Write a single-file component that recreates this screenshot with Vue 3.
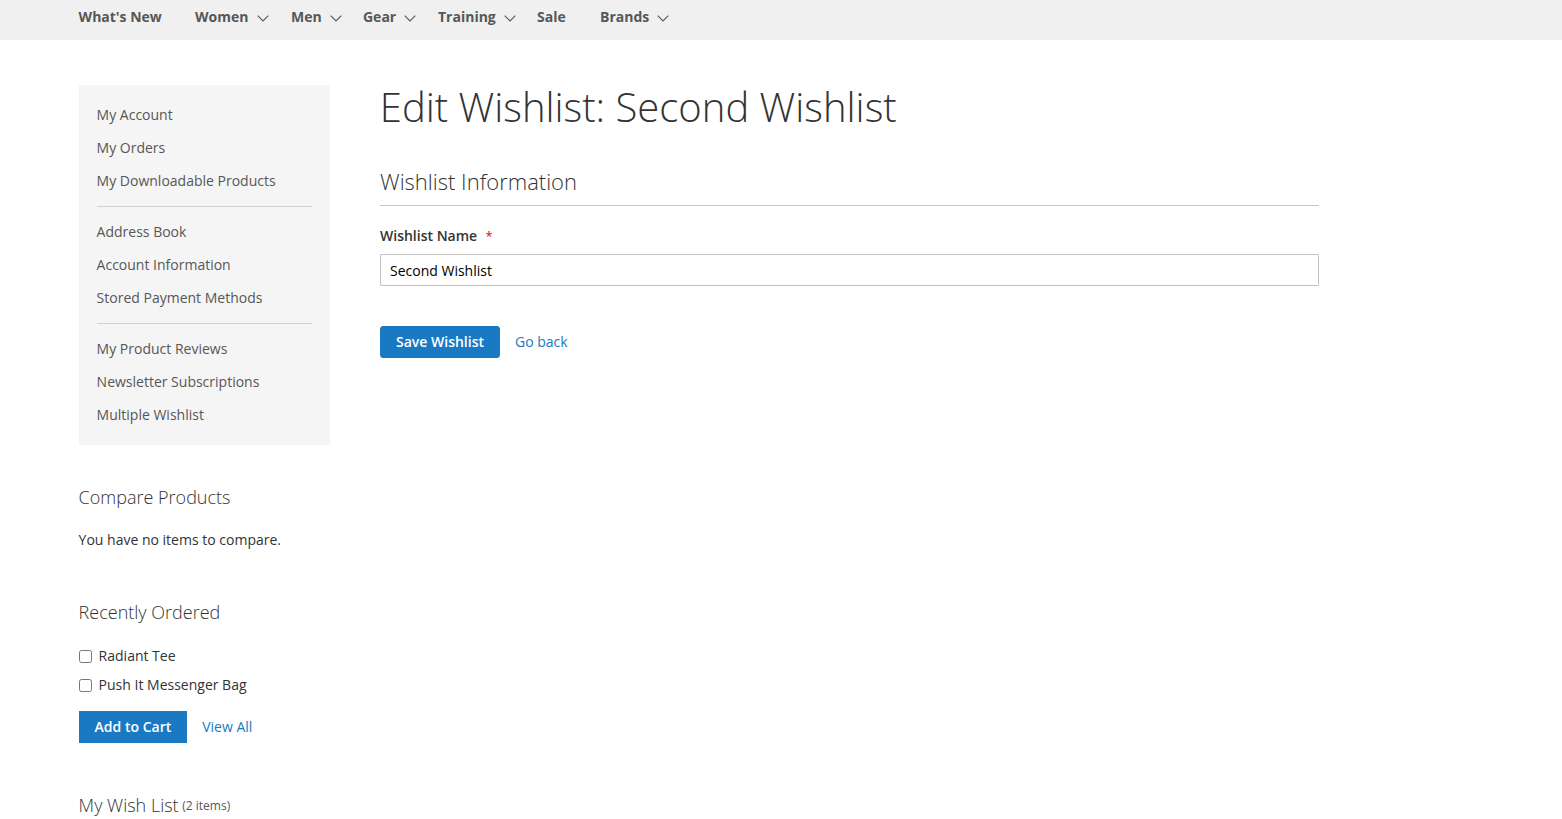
<script setup>
const navItems = [
  { label: "What's New", caret: false, width: 116.4 },
  { label: 'Women', caret: true, width: 96 },
  { label: 'Men', caret: true, width: 72 },
  { label: 'Gear', caret: true, width: 75 },
  { label: 'Training', caret: true, width: 99 },
  { label: 'Sale', caret: false, width: 63 },
  { label: 'Brands', caret: true, width: 90 },
]

const accountGroups = [
  ['My Account', 'My Orders', 'My Downloadable Products'],
  ['Address Book', 'Account Information', 'Stored Payment Methods'],
  ['My Product Reviews', 'Newsletter Subscriptions', 'Multiple Wishlist'],
]

const recentItems = ['Radiant Tee', 'Push It Messenger Bag']
</script>

<template>
  <div class="page">
    <nav class="nav">
      <a
        v-for="item in navItems"
        :key="item.label"
        class="nav-item"
        :style="{ width: item.width + 'px' }"
        href="#"
      >
        {{ item.label }}
        <svg v-if="item.caret" class="caret" width="12" height="7" viewBox="0 0 12 7">
          <path d="M0.7 0.7L6 6L11.3 0.7" fill="none" stroke="#575757" stroke-width="1.1" />
        </svg>
      </a>
    </nav>

    <div class="columns">
      <aside class="sidebar">
        <div class="account-nav">
          <ul v-for="group in accountGroups" :key="group[0]" class="account-group">
            <li v-for="link in group" :key="link"><a href="#">{{ link }}</a></li>
          </ul>
        </div>

        <section class="block compare">
          <h3 class="block-title">Compare Products</h3>
          <p class="empty">You have no items to compare.</p>
        </section>

        <section class="block recent">
          <h3 class="block-title">Recently Ordered</h3>
          <label v-for="item in recentItems" :key="item" class="recent-item">
            <input type="checkbox" />
            <span>{{ item }}</span>
          </label>
          <div class="actions recent-actions">
            <button class="button square" type="button">Add to Cart</button>
            <a class="link" href="#">View All</a>
          </div>
        </section>

        <section class="block wish">
          <h3 class="block-title">My Wish List <small>(2 items)</small></h3>
        </section>
      </aside>

      <main class="main">
        <h1>Edit Wishlist: Second Wishlist</h1>
        <h2>Wishlist Information</h2>
        <form class="form" @submit.prevent>
          <label class="field-label" for="wishlist-name">Wishlist Name <span>*</span></label>
          <input id="wishlist-name" class="field" type="text" value="Second Wishlist" />
          <div class="actions">
            <button class="button" type="submit">Save Wishlist</button>
            <a class="link" href="#">Go back</a>
          </div>
        </form>
      </main>
    </div>
  </div>
</template>

<style>
html, body {
  margin: 0;
  overflow: hidden;
}
</style>

<style scoped>
.page {
  height: 819px;
  overflow: hidden;
  background: #fff;
  font-family: "Open Sans", "Liberation Sans", sans-serif;
  font-size: 14px;
  color: #333;
}

.nav {
  display: flex;
  height: 40px;
  padding-left: 78.6px;
  background: #f0f0f0;
}

.nav-item {
  display: block;
  flex: none;
  line-height: 34px;
  font-weight: 700;
  color: #575757;
  text-decoration: none;
  white-space: nowrap;
}

.caret {
  margin-left: 4.5px;
}

.columns {
  display: flex;
  padding: 45px 0 0 79px;
}

.sidebar {
  flex: none;
  width: 251px;
}

.account-nav {
  height: 360px;
  box-sizing: border-box;
  padding: 13px 18px 0 17.6px;
  background: #f5f5f5;
}

.account-group {
  margin: 0;
  padding: 0 0 9px;
  list-style: none;
}

.account-group + .account-group {
  margin-top: 0;
  margin-left: 0.4px;
  padding-top: 8px;
  border-top: 1px solid #d1d1d1;
}

.account-group + .account-group li {
  margin-left: -0.4px;
}

.account-group li {
  height: 33px;
  line-height: 33px;
}

.account-group a {
  color: #575757;
  text-decoration: none;
  white-space: nowrap;
}

.block {
  margin-left: -0.4px;
}

.block-title {
  margin: 0;
  font-size: 18px;
  line-height: 25px;
  font-weight: 300;
  color: #333;
}

.block-title small {
  margin-left: -1px;
  font-size: 12px;
  font-weight: 400;
  color: #575757;
  vertical-align: 2px;
}

.compare {
  margin-top: 40px;
}

.empty {
  margin: 20px 0 0;
  line-height: 20px;
  white-space: nowrap;
}

.recent {
  margin-top: 50px;
}

.recent-item {
  display: flex;
  align-items: center;
  height: 29px;
  white-space: nowrap;
}

.recent-item:first-of-type {
  margin-top: 16px;
}

.recent-item input {
  width: 13px;
  height: 13px;
  margin: 1px 7px 0 0;
}

.recent-actions {
  margin-top: 12px;
}

.wish {
  margin-top: 50px;
}

.main {
  flex: none;
  width: 939px;
  margin-left: 50px;
}

h1 {
  margin: -1px 0 0 -0.2px;
  font-size: 40px;
  line-height: 46px;
  font-weight: 300;
  color: #333;
  white-space: nowrap;
}

h2 {
  margin: 37px 0 0;
  padding-bottom: 10px;
  font-size: 22px;
  line-height: 28px;
  font-weight: 300;
  color: #333;
  border-bottom: 1px solid #c6c6c6;
}

.form {
  display: block;
}

.field-label {
  display: block;
  margin-top: 20px;
  line-height: 20px;
  font-weight: 600;
}

.field-label span {
  margin-left: 5px;
  color: #e02b27;
  font-size: 12px;
}

.field {
  display: block;
  box-sizing: border-box;
  width: 939px;
  height: 32px;
  margin-top: 7px;
  padding: 0 9px;
  border: 1px solid #c2c2c2;
  border-radius: 1px;
  background: #fff;
  font: 14px "Open Sans", "Liberation Sans", sans-serif;
  color: #000;
  outline: none;
}

.actions {
  display: flex;
  align-items: center;
  gap: 15px;
}

.form .actions {
  margin-top: 40px;
}

.button {
  height: 32px;
  padding: 0 15px 2px;
  border: 1px solid #1979c3;
  border-radius: 3px;
  background: #1979c3;
  font: 600 14px "Open Sans", "Liberation Sans", sans-serif;
  color: #fff;
}

.button.square {
  border-radius: 0;
}

.link {
  padding-bottom: 2px;
  color: #1979c3;
  text-decoration: none;
}
</style>
